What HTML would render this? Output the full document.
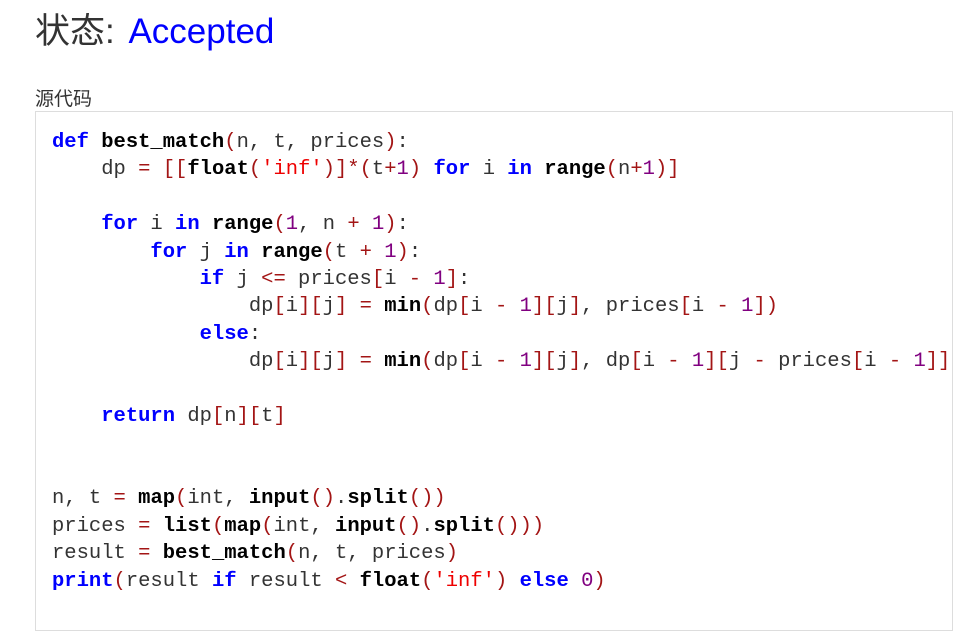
<!DOCTYPE html>
<html><head><meta charset="utf-8"><style>
body{margin:0;background:#fff;width:969px;height:604px;overflow:hidden;font-family:"Liberation Sans","Noto Sans CJK SC",sans-serif;}
h1{position:absolute;left:35px;top:10px;margin:0;font-size:35px;font-weight:normal;color:#333;line-height:44px;white-space:nowrap}
h1 span{color:#0000ff;margin-left:4px}
.lab{position:absolute;left:35px;top:84px;font-size:19px;color:#333}
pre{position:absolute;left:35px;top:111px;width:918px;height:520px;margin:0;border:1px solid #ddd;overflow:hidden;padding:17px 0 0 16px;box-sizing:border-box;font-family:"Liberation Mono","Courier New",monospace;font-size:20.5px;line-height:27.4px;color:#333}
.k{color:#0000ff;font-weight:bold}.b{color:#000;font-weight:bold}.p{color:#a31515}.n{color:#800080}.s{color:#e00}
</style></head><body>
<h1>状态: <span>Accepted</span></h1>
<div class="lab">源代码</div>
<pre><span class="k">def</span> <span class="b">best_match</span><span class="p">(</span>n, t, prices<span class="p">)</span>:
    dp <span class="p">=</span> <span class="p">[[</span><span class="b">float</span><span class="p">(</span><span class="s">'inf'</span><span class="p">)]*(</span>t<span class="p">+</span><span class="n">1</span><span class="p">)</span> <span class="k">for</span> i <span class="k">in</span> <span class="b">range</span><span class="p">(</span>n<span class="p">+</span><span class="n">1</span><span class="p">)]</span>

    <span class="k">for</span> i <span class="k">in</span> <span class="b">range</span><span class="p">(</span><span class="n">1</span>, n <span class="p">+</span> <span class="n">1</span><span class="p">)</span>:
        <span class="k">for</span> j <span class="k">in</span> <span class="b">range</span><span class="p">(</span>t <span class="p">+</span> <span class="n">1</span><span class="p">)</span>:
            <span class="k">if</span> j <span class="p">&lt;=</span> prices<span class="p">[</span>i <span class="p">-</span> <span class="n">1</span><span class="p">]</span>:
                dp<span class="p">[</span>i<span class="p">][</span>j<span class="p">]</span> <span class="p">=</span> <span class="b">min</span><span class="p">(</span>dp<span class="p">[</span>i <span class="p">-</span> <span class="n">1</span><span class="p">][</span>j<span class="p">]</span>, prices<span class="p">[</span>i <span class="p">-</span> <span class="n">1</span><span class="p">])</span>
            <span class="k">else</span>:
                dp<span class="p">[</span>i<span class="p">][</span>j<span class="p">]</span> <span class="p">=</span> <span class="b">min</span><span class="p">(</span>dp<span class="p">[</span>i <span class="p">-</span> <span class="n">1</span><span class="p">][</span>j<span class="p">]</span>, dp<span class="p">[</span>i <span class="p">-</span> <span class="n">1</span><span class="p">][</span>j <span class="p">-</span> prices<span class="p">[</span>i <span class="p">-</span> <span class="n">1</span><span class="p">]])</span>

    <span class="k">return</span> dp<span class="p">[</span>n<span class="p">][</span>t<span class="p">]</span>


n, t <span class="p">=</span> <span class="b">map</span><span class="p">(</span>int, <span class="b">input</span><span class="p">()</span>.<span class="b">split</span><span class="p">())</span>
prices <span class="p">=</span> <span class="b">list</span><span class="p">(</span><span class="b">map</span><span class="p">(</span>int, <span class="b">input</span><span class="p">()</span>.<span class="b">split</span><span class="p">()))</span>
result <span class="p">=</span> <span class="b">best_match</span><span class="p">(</span>n, t, prices<span class="p">)</span>
<span class="k">print</span><span class="p">(</span>result <span class="k">if</span> result <span class="p">&lt;</span> <span class="b">float</span><span class="p">(</span><span class="s">'inf'</span><span class="p">)</span> <span class="k">else</span> <span class="n">0</span><span class="p">)</span></pre>
</body></html>
